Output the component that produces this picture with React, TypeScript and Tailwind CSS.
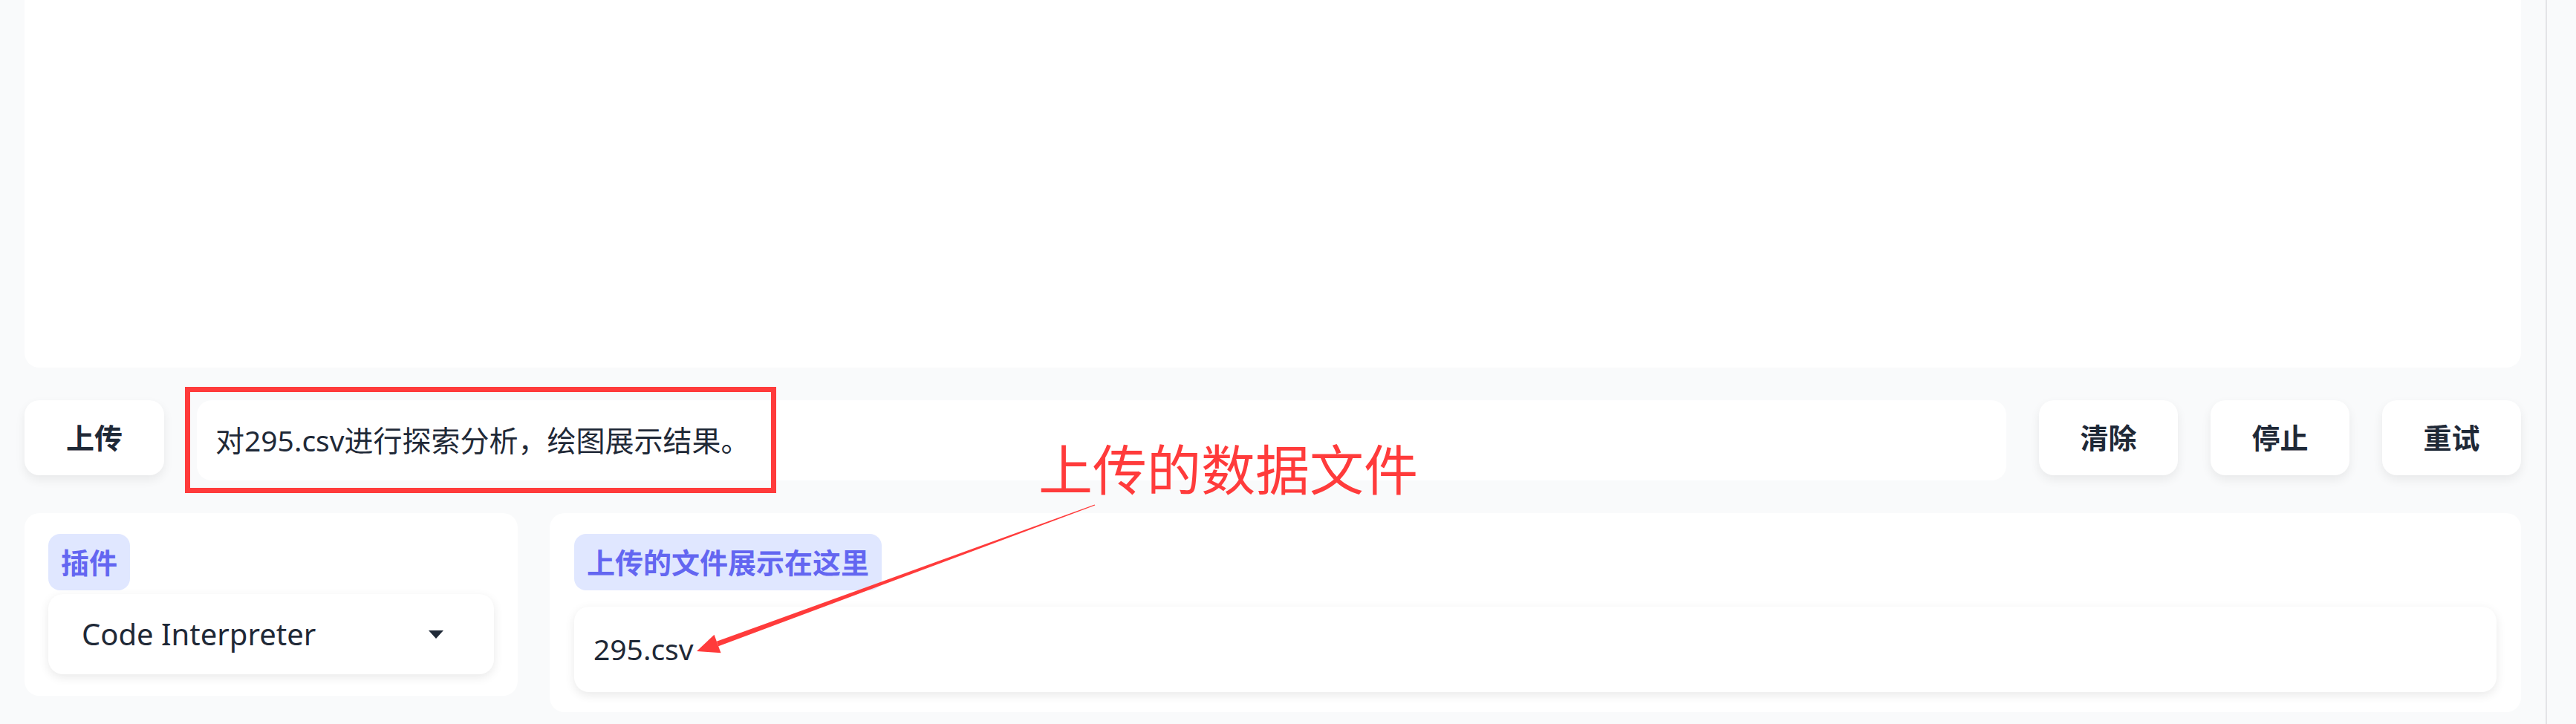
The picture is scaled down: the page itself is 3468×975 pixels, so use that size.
import React from "react";

const font = "font-['Noto_Sans','Noto_Sans_CJK_SC',sans-serif]";

function ActionButton({ label, className = "" }: { label: string; className?: string }) {
  return (
    <button
      className={`h-[101px] w-[187px] shrink-0 rounded-[20px] bg-white text-[38px] font-bold text-[#1f2937] shadow-[0_6px_14px_rgba(0,0,0,0.07)] ${className}`}
    >
      {label}
    </button>
  );
}

function Badge({ children }: { children: React.ReactNode }) {
  return (
    <div className="inline-flex h-[76px] items-center rounded-[16px] bg-[#e0e7ff] px-[17px] text-[38px] font-bold leading-none text-[#6366f1]">
      {children}
    </div>
  );
}

export default function App() {
  return (
    <div className={`relative flex h-[975px] w-[3468px] overflow-hidden bg-[#f9fafb] ${font}`}>
      {/* main column */}
      <div className="flex w-[3427px] flex-col gap-[44px] px-[33px]">
        {/* chat area */}
        <div className="h-[495px] rounded-b-[20px] bg-white" />

        {/* input row */}
        <div className="flex items-start gap-[44px]">
          <ActionButton label="上传" className="w-[188px]" />
          <div className="flex h-[108px] flex-1 items-center rounded-[20px] bg-white px-[25px] text-[39px] text-[#1f2937]">
            对295.csv进行探索分析，绘图展示结果。
          </div>
          <ActionButton label="清除" />
          <ActionButton label="停止" />
          <ActionButton label="重试" />
        </div>

        {/* bottom row */}
        <div className="flex items-start gap-[43px]">
          <div className="flex w-[664px] shrink-0 flex-col items-start rounded-[20px] bg-white px-[32px] pb-[29px] pt-[28px]">
            <Badge>插件</Badge>
            <div className="mt-[5px] flex h-[108px] w-full items-center justify-between rounded-[20px] bg-white pl-[45px] pr-[68px] text-[40px] text-[#1f2937] shadow-[0_4px_14px_rgba(0,0,0,0.09)]">
              <span>Code Interpreter</span>
              <svg width="20" height="11" viewBox="0 0 20 11">
                <polygon points="0,0 20,0 10,11" fill="#1f2937" />
              </svg>
            </div>
          </div>

          <div className="flex flex-1 flex-col items-start rounded-[20px] bg-white px-[33px] pb-[27px] pt-[28px]">
            <Badge>上传的文件展示在这里</Badge>
            <div className="mt-[22px] flex h-[115px] w-full items-center rounded-[20px] bg-white px-[26px] text-[39px] text-[#1f2937] shadow-[0_4px_14px_rgba(0,0,0,0.09)]">
              295.csv
            </div>
          </div>
        </div>
      </div>

      {/* right edge */}
      <div className="w-[2px] bg-[#e4e4e7]" />
      <div className="flex-1" />

      {/* annotation overlay */}
      <div className="pointer-events-none absolute left-[249px] top-[521px] h-[143px] w-[796px] border-[7px] border-[#ff3b3b]" />
      <div className="pointer-events-none absolute left-[1398px] top-[595px] text-[73px] leading-none text-[#ff3b3b]">
        上传的数据文件
      </div>
      <svg
        className="pointer-events-none absolute left-0 top-0"
        width="3468"
        height="975"
        viewBox="0 0 3468 975"
      >
        <polygon points="1474.3,680.5 1473.7,679.5 964.8,863.7 967.2,870.3" fill="#ff3b3b" />
        <polygon points="938,877 961.5,854.8 970.5,879.2" fill="#ff3b3b" />
      </svg>
    </div>
  );
}
